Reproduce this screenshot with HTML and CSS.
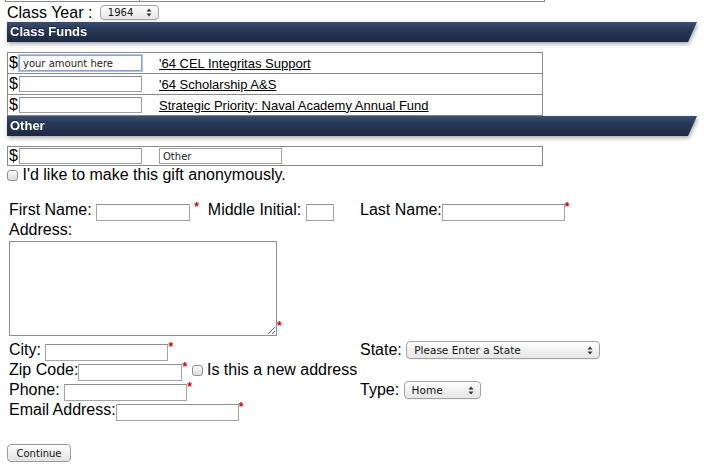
FILE: index.html
```html
<!DOCTYPE html>
<html>
<head>
<meta charset="utf-8">
<link rel="stylesheet" href="styles.css">
</head>
<body>
<div class="page">
  <div class="prev-row"><div class="prev-cell a"></div><div class="prev-cell b"></div></div>

  <div class="year-line">Class Year : <span class="sel sel-year"><select class="mac"><option>1964</option></select><svg class="arr" viewBox="0 0 6 9" width="6" height="9"><path d="M3 0.5 L5.5 3.5 H0.5 Z M3 8.5 L5.5 5.5 H0.5 Z" fill="#333"/></svg></span></div>

  <div class="bar-wrap"><div class="bar">Class Funds</div></div>

  <div class="fund-table">
    <div class="fund-row"><span class="dollar">$</span><input class="amt focus" type="text" value="your amount here"><a class="fund-link" href="#">'64 CEL Integritas Support</a></div>
    <div class="fund-row"><span class="dollar">$</span><input class="amt" type="text"><a class="fund-link" href="#">'64 Scholarship A&amp;S</a></div>
    <div class="fund-row"><span class="dollar">$</span><input class="amt" type="text"><a class="fund-link" href="#">Strategic Priority: Naval Academy Annual Fund</a></div>
  </div>

  <div class="bar-wrap"><div class="bar">Other</div></div>

  <div class="fund-table other-table">
    <div class="fund-row short"><span class="dollar">$</span><input class="amt" type="text"><input class="other-name" type="text" value="Other"></div>
  </div>

  <label class="anon"><input class="mac-check" type="checkbox"> I'd like to make this gift anonymously.</label>

  <div class="form-grid">
    <div class="cell">First Name: <input class="tf w94" type="text"><span class="req sp">*</span><span class="gap"></span>Middle Initial: <input class="tf w28" type="text"></div>
    <div class="cell">Last Name:<input class="tf w123" type="text"><span class="req">*</span></div>

    <div class="cell span addr-label">Address:</div>
    <div class="cell span ta-cell"><textarea class="addr"></textarea><span class="req">*</span></div>

    <div class="cell">City: <input class="tf w123" type="text"><span class="req">*</span></div>
    <div class="cell">State: <span class="sel sel-state"><select class="mac"><option>Please Enter a State</option></select><svg class="arr" viewBox="0 0 6 9" width="6" height="9"><path d="M3 0.5 L5.5 3.5 H0.5 Z M3 8.5 L5.5 5.5 H0.5 Z" fill="#333"/></svg></span></div>

    <div class="cell">Zip Code:<input class="tf w104" type="text"><span class="req">*</span> <input class="mac-check" type="checkbox"> Is this a new address</div>
    <div class="cell"></div>

    <div class="cell">Phone: <input class="tf w123" type="text"><span class="req">*</span></div>
    <div class="cell">Type: <span class="sel sel-type"><select class="mac"><option>Home</option></select><svg class="arr" viewBox="0 0 6 9" width="6" height="9"><path d="M3 0.5 L5.5 3.5 H0.5 Z M3 8.5 L5.5 5.5 H0.5 Z" fill="#333"/></svg></span></div>

    <div class="cell span">Email Address:<input class="tf w123" type="text"><span class="req">*</span></div>
  </div>

  <button class="continue" type="button">Continue</button>
</div>
</body>
</html>
```

FILE: styles.css
```css
html, body {
  margin: 0;
  padding: 0;
  background: #fff;
}
body {
  font-family: "Liberation Sans", Arial, sans-serif;
  font-size: 16px;
  color: #000;
}
.page {
  padding-left: 7px;
  width: 690px;
}
.prev-row {
  display: flex;
  margin-left: -2px;
  width: 538px;
  height: 1px;
  border: 1px solid #8a8a8a;
  border-top: none;
}
.prev-cell.a {
  width: 133px;
  border-right: 1px solid #8a8a8a;
}
.year-line {
  height: 19px;
  line-height: 19px;
  margin-top: 1px;
  display: flex;
  align-items: center;
  white-space: pre;
}
.sel {
  position: relative;
  display: inline-block;
}
.mac {
  appearance: none;
  -webkit-appearance: none;
  font-family: "DejaVu Sans", sans-serif;
  font-size: 10px;
  color: #111;
  border: 1px solid #a3a3a3;
  border-radius: 4px;
  background: linear-gradient(#ffffff, #f1f1f1 50%, #e6e6e6);
  padding: 0 0 0 7px;
  margin: 0;
  box-shadow: 0 1px 0 rgba(0,0,0,0.05);
  display: block;
}
.sel .arr {
  position: absolute;
  right: 7px;
  top: 50%;
  margin-top: -4.5px;
}
.sel-year .mac { width: 59px; height: 15px; line-height: 13px; }
.sel-year { margin-left: 3px; }
.sel-state .mac { width: 194px; height: 18px; line-height: 16px; font-size: 10.5px; }
.sel-type .mac { width: 77px; height: 18px; line-height: 16px; font-size: 10.5px; }
.sel-state, .sel-type { vertical-align: top; margin-top: 1px; }

.bar-wrap {
  width: 690px;
  height: 20px;
  filter: drop-shadow(1px 2px 2px rgba(0,0,0,0.35));
}
.bar {
  height: 20px;
  box-sizing: border-box;
  padding-left: 3px;
  line-height: 20px;
  font-size: 13px;
  font-weight: bold;
  color: #fff;
  background: linear-gradient(#3b4e70, #2a3a58 35%, #1c2943);
  clip-path: polygon(0 0, 100% 0, calc(100% - 9px) 100%, 0 100%);
  text-shadow: 0 -1px 0 rgba(0,0,0,0.4);
}
.fund-table {
  width: 536px;
  box-sizing: border-box;
  border: 1px solid #8a8a8a;
  border-bottom: none;
  margin-top: 10px;
}
.fund-row {
  display: flex;
  align-items: center;
  height: 20px;
  border-bottom: 1px solid #8a8a8a;
}
.fund-row.short { height: 18px; }
.other-table { margin-top: 10px; }
.dollar {
  width: 10px;
  padding-left: 1px;
  font-size: 16px;
  line-height: 16px;
}
.amt {
  box-sizing: border-box;
  width: 123px;
  height: 16px;
  border: 1px solid #a0a0a0;
  border-top-color: #8c8c8c;
  padding: 0 3px;
  margin: 0;
  font-family: "DejaVu Sans", sans-serif;
  font-size: 10px;
  color: #222;
}
.amt.focus {
  border: 1px solid #7ea7d6;
  box-shadow: 0 0 0 1px #a9c6ea;
}
.fund-link {
  margin-left: 17px;
  font-size: 13px;
  color: #000;
  text-decoration: underline;
}
.other-name {
  box-sizing: border-box;
  width: 123px;
  height: 16px;
  margin: 0 0 0 17px;
  border: 1px solid #a0a0a0;
  padding: 0 3px;
  font-family: "DejaVu Sans", sans-serif;
  font-size: 10px;
  color: #222;
}
.mac-check {
  appearance: none;
  -webkit-appearance: none;
  width: 11px;
  height: 11px;
  margin: 0;
  border: 1px solid #8f8f8f;
  border-radius: 3px;
  background: linear-gradient(#fbfbfb, #dcdcdc);
  vertical-align: -1px;
}
.anon {
  display: block;
  margin-top: 0;
  height: 17px;
  line-height: 17px;
}
.form-grid {
  display: grid;
  grid-template-columns: 351px auto;
  margin-top: 17px;
  padding-left: 2px;
}
.cell {
  height: 20px;
  line-height: 20px;
  white-space: nowrap;
}
.cell.span { grid-column: 1 / 3; }
.cell.addr-label { height: 21px; line-height: 19px; }
.ta-cell { height: 99px; display: flex; align-items: flex-start; }
.tf {
  box-sizing: border-box;
  height: 17px;
  border: 1px solid #a5a5a5;
  border-top-color: #909090;
  margin: 0;
  padding: 0 2px;
  vertical-align: -1px;
  font-size: 12px;
}
.w94 { width: 94px; }
.w28 { width: 28px; }
.w104 { width: 104px; }
.w123 { width: 123px; }
.req {
  color: #d40000;
  font-weight: bold;
  font-size: 12px;
  vertical-align: 4px;
  line-height: 10px;
}
.req.sp { margin-left: 4px; }
.gap { display: inline-block; width: 9px; }
.addr {
  box-sizing: border-box;
  width: 268px;
  height: 95px;
  border: 1px solid #8f8f8f;
  margin: 0;
  resize: both;
}
.ta-cell .req { margin-top: 80px; line-height: 10px; }
.continue {
  margin-top: 24px;
  width: 64px;
  height: 18px;
  padding: 0;
  font-family: "DejaVu Sans", sans-serif;
  font-size: 10px;
  color: #111;
  border: 1px solid #9c9c9c;
  border-radius: 4px;
  background: linear-gradient(#ffffff, #f0f0f0 50%, #e2e2e2);
}
```
